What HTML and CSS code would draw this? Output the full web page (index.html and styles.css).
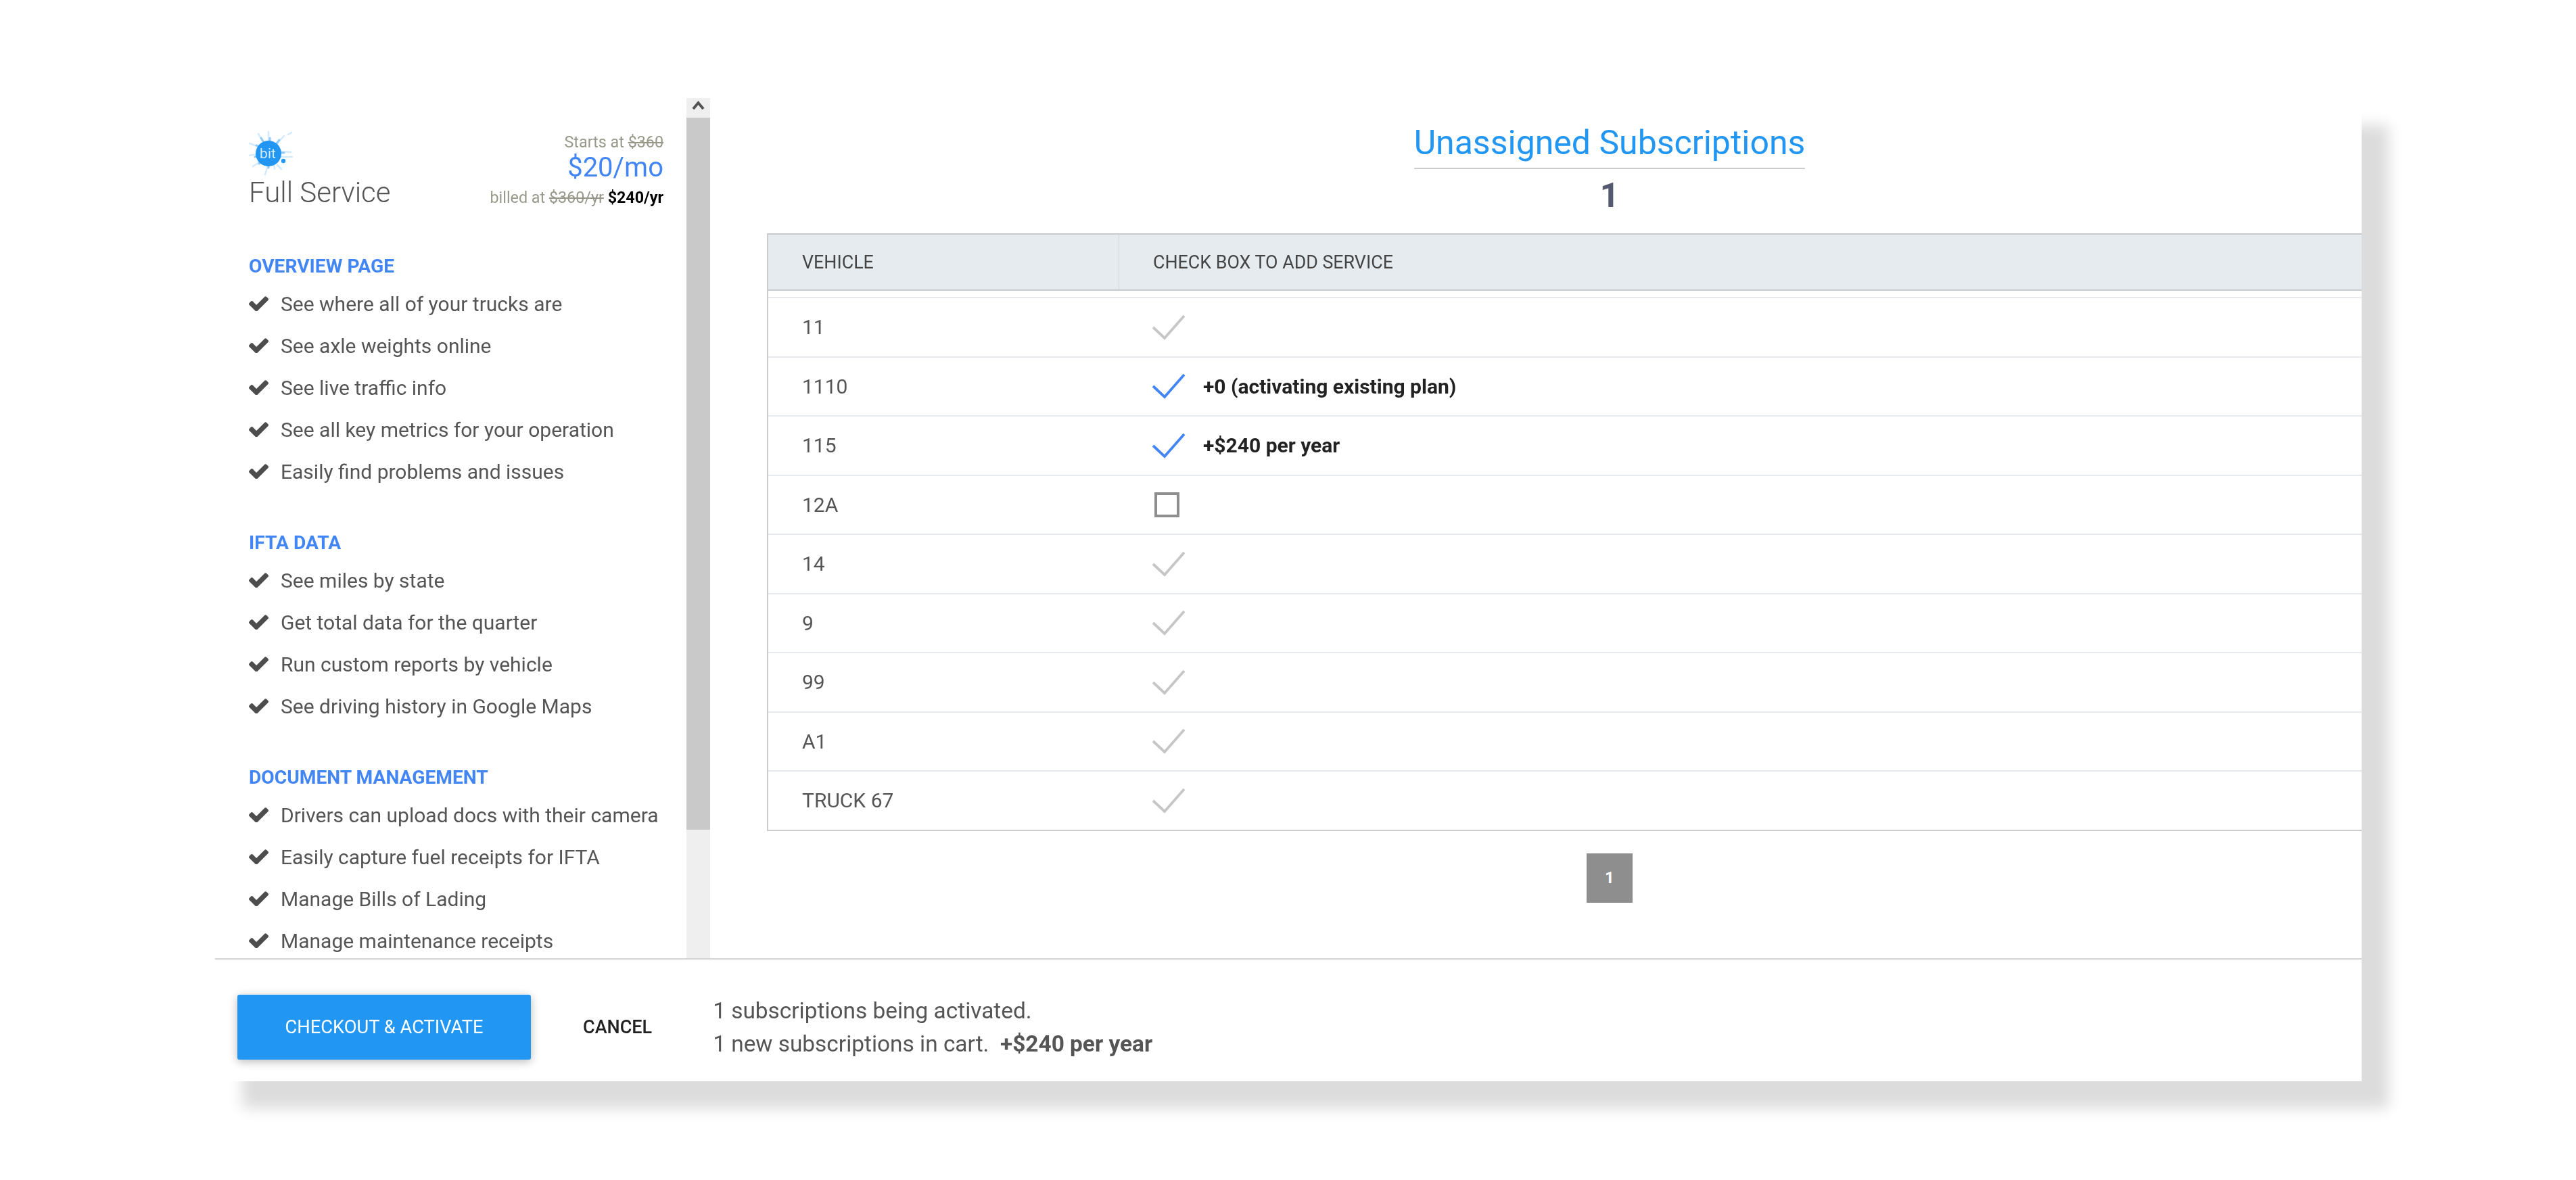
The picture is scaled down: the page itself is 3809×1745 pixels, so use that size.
FILE: index.html
```html
<!DOCTYPE html>
<html lang="en">
<head>
<meta charset="utf-8">
<title>Unassigned Subscriptions</title>
<link rel="stylesheet" href="styles.css">
</head>
<body>
<svg class="defs" width="0" height="0" aria-hidden="true">
  <symbol id="tick" viewBox="121 426 1550 960"><path d="M1671 566q0 40-28 68l-724 724-136 136q-28 28-68 28t-68-28l-136-136-362-362q-28-28-28-68t28-68l136-136q28-28 68-28t68 28l294 295 656-657q28-28 68-28t68 28l136 136q28 28 28 68z"/></symbol>
  <symbol id="thin" viewBox="0 0 50 38"><path d="M2 19 L19 35 L48 2" fill="none" stroke="currentColor" stroke-width="3.8"/></symbol>
</svg>
<div class="stage">
  <div class="panel">
    <div class="upper">
      <aside class="side">
        <header class="plan">
          <div class="plan-name">
            <svg class="logo" viewBox="0 0 66 66" aria-hidden="true">
              <g stroke="#d3e9fc" stroke-width="2.5" stroke-linecap="round" fill="none">
                <path d="M22 26 L1 18M24 20 L14 4M29 18 L29 0M38 22 L52 7M18 33 L0 36M22 42 L6 52M29 48 L24 64M37 46 L38 56M46 30 L62 31M44 38 L64 38M58 5 L63 2M42 50 L48 56"/>
              </g>
              <g stroke="#8fcaf8" stroke-width="3" stroke-linecap="round" fill="none">
                <path d="M22 26 L11 21M24 20 L18 10M31 18 L31 10M38 22 L45 13M18 36 L9 38M22 42 L15 48M29 48 L29 54M47 32 L52 32"/>
              </g>
              <circle cx="29" cy="33" r="19" fill="#2196f3"/>
              <circle cx="51" cy="44" r="3.2" fill="#2196f3"/>
              <text class="logo-text" x="28" y="40">bit</text>
            </svg>
            <h2 class="plan-title">Full Service</h2>
          </div>
          <div class="plan-price">
            <div class="price-line">Starts at <s>$360</s></div>
            <div class="price-main">$20/mo</div>
            <div class="price-line price-billed">billed at <s>$360/yr</s> <b>$240/yr</b></div>
          </div>
        </header>

        <section class="group">
          <h3 class="group-title">OVERVIEW PAGE</h3>
          <ul class="feats">
            <li class="feat"><svg class="feat-ico"><use href="#tick"/></svg>See where all of your trucks are</li>
            <li class="feat"><svg class="feat-ico"><use href="#tick"/></svg>See axle weights online</li>
            <li class="feat"><svg class="feat-ico"><use href="#tick"/></svg>See live traffic info</li>
            <li class="feat"><svg class="feat-ico"><use href="#tick"/></svg>See all key metrics for your operation</li>
            <li class="feat"><svg class="feat-ico"><use href="#tick"/></svg>Easily find problems and issues</li>
          </ul>
        </section>
        <section class="group">
          <h3 class="group-title">IFTA DATA</h3>
          <ul class="feats">
            <li class="feat"><svg class="feat-ico"><use href="#tick"/></svg>See miles by state</li>
            <li class="feat"><svg class="feat-ico"><use href="#tick"/></svg>Get total data for the quarter</li>
            <li class="feat"><svg class="feat-ico"><use href="#tick"/></svg>Run custom reports by vehicle</li>
            <li class="feat"><svg class="feat-ico"><use href="#tick"/></svg>See driving history in Google Maps</li>
          </ul>
        </section>
        <section class="group">
          <h3 class="group-title">DOCUMENT MANAGEMENT</h3>
          <ul class="feats">
            <li class="feat"><svg class="feat-ico"><use href="#tick"/></svg>Drivers can upload docs with their camera</li>
            <li class="feat"><svg class="feat-ico"><use href="#tick"/></svg>Easily capture fuel receipts for IFTA</li>
            <li class="feat"><svg class="feat-ico"><use href="#tick"/></svg>Manage Bills of Lading</li>
            <li class="feat"><svg class="feat-ico"><use href="#tick"/></svg>Manage maintenance receipts</li>
          </ul>
        </section>
      </aside>

      <div class="scrollbar" aria-hidden="true">
        <div class="scroll-btn">
          <svg class="scroll-arrow" viewBox="0 0 19 15"><path d="M2 13 L9.5 4 L17 13" fill="none" stroke="#555" stroke-width="4"/></svg>
        </div>
        <div class="scroll-thumb"></div>
      </div>

      <main class="main">
        <div class="head">
          <h1 class="head-title">Unassigned Subscriptions</h1>
          <div class="head-count">1</div>
        </div>
        <div class="table">
          <div class="thead">
            <div class="th th-a">VEHICLE</div>
            <div class="th th-b">CHECK BOX TO ADD SERVICE</div>
          </div>
          <div class="tbody">
            <div class="row"><div class="cell-a">11</div><div class="cell-b"><svg class="mark mark-off"><use href="#thin"/></svg></div></div>
            <div class="row"><div class="cell-a">1110</div><div class="cell-b"><svg class="mark mark-on"><use href="#thin"/></svg><span class="note">+0 (activating existing plan)</span></div></div>
            <div class="row"><div class="cell-a">115</div><div class="cell-b"><svg class="mark mark-on"><use href="#thin"/></svg><span class="note">+$240 per year</span></div></div>
            <div class="row"><div class="cell-a">12A</div><div class="cell-b"><span class="box"></span></div></div>
            <div class="row"><div class="cell-a">14</div><div class="cell-b"><svg class="mark mark-off"><use href="#thin"/></svg></div></div>
            <div class="row"><div class="cell-a">9</div><div class="cell-b"><svg class="mark mark-off"><use href="#thin"/></svg></div></div>
            <div class="row"><div class="cell-a">99</div><div class="cell-b"><svg class="mark mark-off"><use href="#thin"/></svg></div></div>
            <div class="row"><div class="cell-a">A1</div><div class="cell-b"><svg class="mark mark-off"><use href="#thin"/></svg></div></div>
            <div class="row"><div class="cell-a">TRUCK 67</div><div class="cell-b"><svg class="mark mark-off"><use href="#thin"/></svg></div></div>
          </div>
        </div>
        <div class="pager"><span class="page">1</span></div>
      </main>
    </div>

    <footer class="foot">
      <button class="btn-primary" type="button">CHECKOUT &amp; ACTIVATE</button>
      <button class="btn-flat" type="button">CANCEL</button>
      <div class="summary">
        <div>1 subscriptions being activated.</div>
        <div>1 new subscriptions in cart. &nbsp;<b class="summary-total">+$240 per year</b></div>
      </div>
    </footer>
  </div>
</div>
</body>
</html>
```

FILE: styles.css
```css
* { box-sizing: border-box; }
html, body { margin: 0; padding: 0; background: #fff; }
body { font-family: Roboto, "Liberation Sans", sans-serif; color: #555; overflow: hidden; }
.defs { display: block; height: 0; }

.stage { padding: 145px 0 0 318px; height: 1745px; }
.panel {
  width: 3174px; height: 1454px;
  background: #fff;
  display: flex; flex-direction: column;
  box-shadow: 40px 40px 20px #dcdcdc;
}
.upper { flex: 0 0 1272px; display: flex; overflow: hidden; filter: blur(0.6px); }

/* sidebar */
.side { flex: 0 0 697px; padding: 47px 34px 0 50px; overflow: hidden; }
.plan { display: flex; justify-content: space-between; align-items: flex-end; }
.logo { display: block; width: 66px; height: 66px; margin-top: 2px; }
.logo-text { fill: #d8ecfd; font-size: 21px; text-anchor: middle; font-family: Roboto, sans-serif; }
.plan-title { margin: 0; font-size: 42px; line-height: 50px; font-weight: 300; color: #555; }
.plan-price { text-align: right; }
.price-line { font-size: 23.3px; line-height: 36px; color: #98988a; }
.price-main { font-size: 40px; line-height: 40px; color: #4285f4; }
.price-billed { margin-top: 6px; }
.price-billed b { color: #000; font-weight: 700; }
.group { margin-top: 55px; }
.plan + .group { margin-top: 64px; }
.group-title { margin: 0; font-size: 28.2px; line-height: 40px; font-weight: 700; color: #4285f4; }
.feats { list-style: none; margin: 4px 0 0; padding: 0; }
.feat { display: flex; align-items: center; gap: 18px; height: 62px; font-size: 30px; color: #555; white-space: nowrap; }
.feat-ico { flex: 0 0 29px; width: 29px; height: 22px; fill: #4d4d4d; }

/* scrollbar */
.scrollbar { flex: 0 0 35px; background: #efefef; }
.scroll-btn { height: 29px; display: flex; justify-content: center; padding-top: 3px; }
.scroll-arrow { width: 19px; height: 15px; }
.scroll-thumb { height: 1053px; background: #c9c9c9; }

/* main */
.main { flex: 1 1 0; min-width: 0; padding: 0 0 0 84px; overflow: hidden; }
.head { width: 2492px; padding-top: 35px; text-align: center; }
.head-title {
  display: inline-block; margin: 0; padding-bottom: 6px;
  font-size: 50px; line-height: 62px; font-weight: 400; color: #2196f3;
  border-bottom: 2px solid #ccc;
}
.head-count { font-size: 50px; line-height: 60px; font-weight: 700; color: #555a70; margin-top: 9px; }
.table { width: 2492px; margin-top: 26px; border-left: 2px solid #ccc; border-bottom: 2px solid #ccc; }
.thead { display: flex; height: 85px; background: #e6ebef; border-top: 2px solid #c8cacc; border-bottom: 2px solid #c8cacc; }
.th { display: flex; align-items: center; font-size: 26.8px; color: #444; }
.th-a { flex: 0 0 519px; padding-left: 50px; border-right: 1px solid #d2d6da; }
.th-b { padding-left: 50px; }
.tbody { padding-top: 9px; }
.row { display: flex; height: 87.5px; border-top: 2px solid #e6e9ee; }
.cell-a { flex: 0 0 519px; padding-left: 50px; display: flex; align-items: center; font-size: 30px; color: #555; }
.cell-b { display: flex; align-items: center; padding-left: 48px; }
.mark { width: 50px; height: 38px; flex: 0 0 50px; }
.mark-off { color: #c6c6c6; }
.mark-on { color: #4285f4; }
.note { margin-left: 26px; font-size: 30px; font-weight: 700; color: #222; }
.box { width: 37px; height: 37px; margin-left: 4px; border: 4px solid #8e8e8e; }
.pager { width: 2492px; padding-top: 33px; display: flex; justify-content: center; }
.page { width: 68px; height: 73px; background: #8e8e8e; color: #fff; font-size: 24px; font-weight: 700; display: flex; align-items: center; justify-content: center; }

/* footer */
.foot { flex: 1 1 0; display: flex; align-items: center; border-top: 2px solid #d4d4d4; padding: 20px 0 0 33px; }
.btn-primary {
  width: 434px; height: 96px;
  background: #2196f3; color: #fff; border: 0; border-radius: 3px;
  font-family: inherit; font-size: 27.3px; font-weight: 400;
  box-shadow: 0 3px 14px rgba(0,0,0,.28);
  filter: blur(0.4px);
}
.btn-flat { margin: 0 0 0 77px; padding: 0; background: none; border: 0; font-family: inherit; font-size: 27px; font-weight: 500; color: #222; filter: blur(0.5px); }
.summary { margin-left: 90px; font-size: 33.4px; line-height: 49px; color: #555; filter: blur(0.6px); }
.summary-total { font-weight: 700; }
```
